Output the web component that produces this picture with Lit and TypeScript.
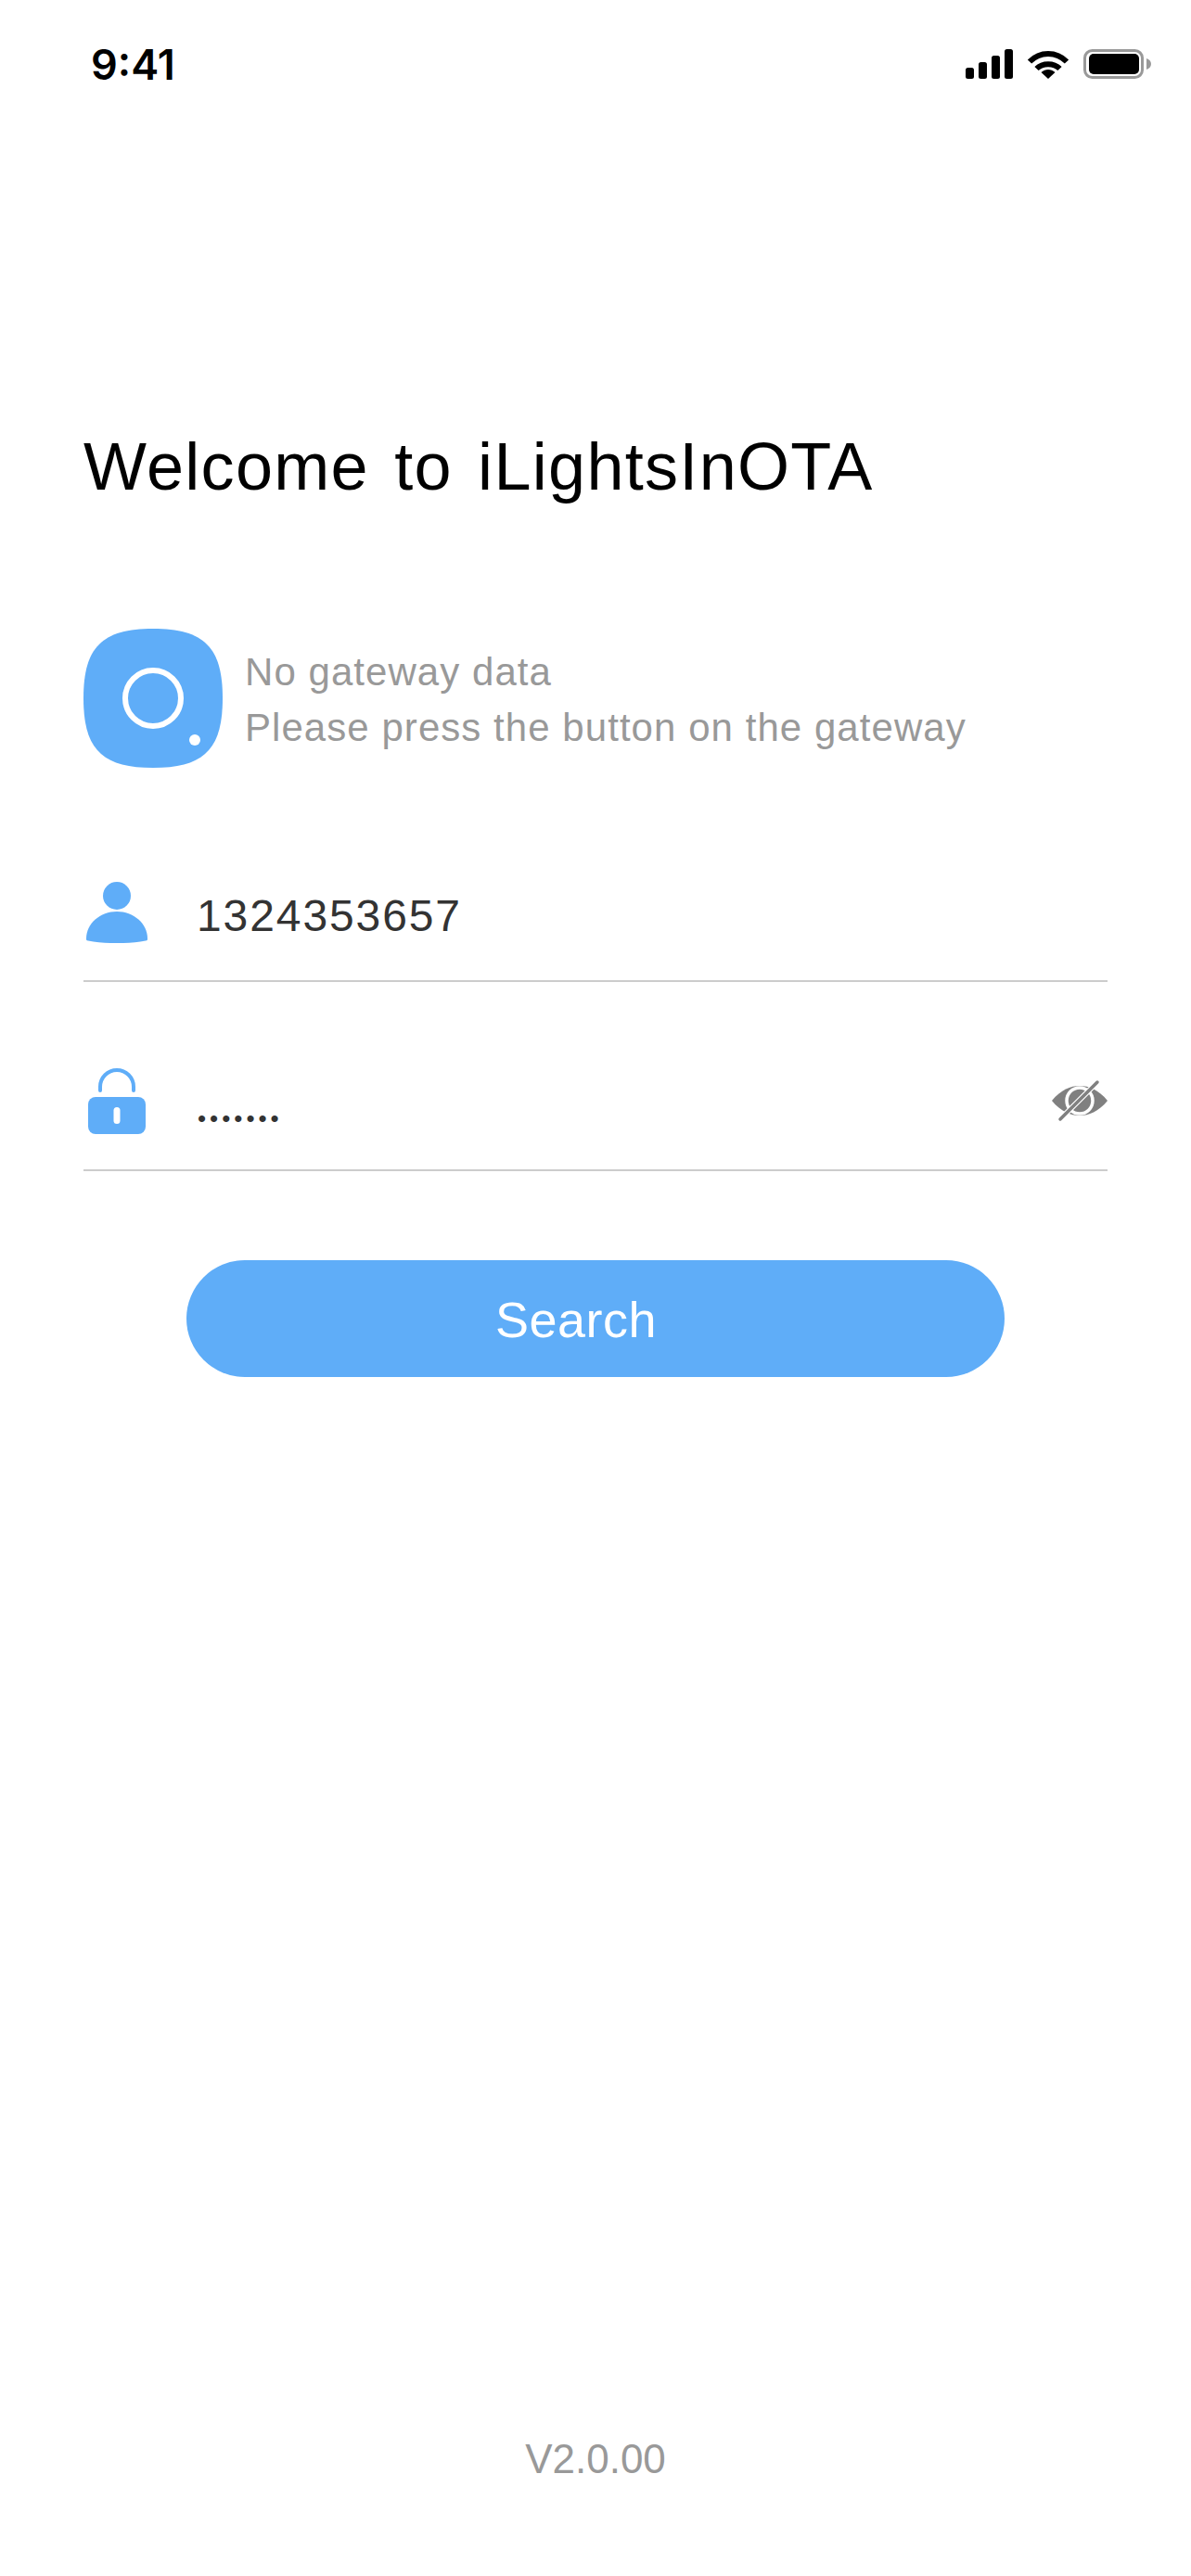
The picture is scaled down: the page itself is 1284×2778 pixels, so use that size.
import { LitElement, css, html } from 'lit';
import { customElement } from 'lit/decorators.js';

@customElement('app-root')
export class AppRoot extends LitElement {
  static styles = css`
    :host {
      display: block;
      font-family: 'Liberation Sans', Arial, sans-serif;
      background: #fff;
    }
    svg {
      display: block;
      flex: none;
    }
    .page {
      height: 2778px;
      display: flex;
      flex-direction: column;
    }
    .status {
      height: 138px;
      display: flex;
      align-items: flex-start;
      justify-content: space-between;
      padding: 53px 43px 0 98px;
      box-sizing: border-box;
    }
    .time {
      font-family: Inter, sans-serif;
      font-weight: 600;
      font-size: 45px;
      line-height: 33px;
      color: #000;
    }
    .status-icons {
      display: flex;
      align-items: flex-start;
      gap: 15px;
    }
    .content {
      flex: 1;
      display: flex;
      flex-direction: column;
      padding: 0 90px;
    }
    h1 {
      margin: 321px 0 0;
      font-size: 72px;
      line-height: 88px;
      font-weight: 400;
      color: #000;
      letter-spacing: 1.3px;
      word-spacing: 6px;
    }
    .gateway {
      margin-top: 131px;
      display: flex;
      align-items: center;
      gap: 24px;
    }
    .gateway-text {
      font-size: 42px;
      line-height: 60px;
      color: #999;
      letter-spacing: 1.05px;
      padding-top: 3px;
    }
    .field {
      display: flex;
      align-items: center;
      border-bottom: 2px solid #ccc;
    }
    .field.user {
      margin-top: 115px;
      padding: 0 0 32px 3px;
      height: 82px;
    }
    .field.pass {
      margin-top: 88px;
      padding: 0 0 33px 5px;
      height: 81px;
    }
    .value {
      margin-left: 53px;
      font-size: 48px;
      letter-spacing: 1.9px;
      color: #333;
      padding-top: 6px;
    }
    .dots {
      margin-left: 56px;
      flex: 1;
      font-size: 26px;
      letter-spacing: 4px;
      color: #333;
      padding-top: 38px;
    }
    .login {
      margin: 96px auto 0;
      width: 882px;
      height: 126px;
      border: none;
      border-radius: 63px;
      background: #5fadf8;
      color: #fff;
      font-family: inherit;
      font-size: 54px;
      letter-spacing: 0.5px;
      padding: 2px 42px 0 0;
    }
    .version {
      margin-top: auto;
      padding-bottom: 101px;
      text-align: center;
      font-size: 44px;
      color: #999;
    }
  `;

  render() {
    return html`
      <div class="page">
        <div class="status">
          <div class="time">9:41</div>
          <div class="status-icons">
            <svg width="51" height="32" viewBox="0 0 51 32">
              <rect x="0" y="20" width="9" height="12" rx="2.5" />
              <rect x="14" y="14" width="9" height="18" rx="2.5" />
              <rect x="28" y="7" width="9" height="25" rx="2.5" />
              <rect x="42" y="0" width="9" height="32" rx="2.5" />
            </svg>
            <svg width="46" height="32" viewBox="0 0 46 32">
              <path d="M3 13.5C14 2 32 2 43 13.5" fill="none" stroke="#000" stroke-width="6" />
              <path d="M10.5 21C17 14.5 29 14.5 35.5 21" fill="none" stroke="#000" stroke-width="6" />
              <path d="M15.5 25C20 21 26 21 30.5 25L23 32Z" />
            </svg>
            <svg width="73" height="32" viewBox="0 0 73 32">
              <rect x="1.5" y="1.5" width="62" height="29" rx="8" fill="none" stroke="#999" stroke-width="3" />
              <rect x="6" y="5" width="54" height="22" rx="5" />
              <path d="M68 10C71 11 73 13 73 16C73 19 71 21 68 22Z" fill="#999" />
            </svg>
          </div>
        </div>
        <div class="content">
          <h1>Welcome to iLightsInOTA</h1>
          <div class="gateway">
            <svg width="150" height="150" viewBox="0 0 150 150">
              <path d="M75 0C130 0 150 20 150 75C150 130 130 150 75 150C20 150 0 130 0 75C0 20 20 0 75 0Z" fill="#5fadf8" />
              <circle cx="75" cy="75" r="30" fill="none" stroke="#fff" stroke-width="6" />
              <circle cx="120" cy="120" r="6" fill="#fff" />
            </svg>
            <div class="gateway-text">
              <div>No gateway data</div>
              <div>Please press the button on the gateway</div>
            </div>
          </div>
          <div class="field user">
            <svg width="66" height="66" viewBox="0 0 66 66" fill="#5fadf8">
              <circle cx="33" cy="15" r="15" />
              <path d="M0 61C0 45 15 32 33 32C51 32 66 45 66 61C66 63 66 63 64 63.5C45 67 21 67 2 63.5C0 63 0 63 0 61Z" />
            </svg>
            <span class="value">1324353657</span>
          </div>
          <div class="field pass">
            <svg width="62" height="71" viewBox="0 0 62 71">
              <rect x="0" y="31" width="62" height="40" rx="8" fill="#5fadf8" />
              <path d="M13 24V20A18 18 0 0 1 49 20V24" fill="none" stroke="#5fadf8" stroke-width="4" stroke-linecap="round" />
              <rect x="27.5" y="42" width="7" height="18" rx="3.5" fill="#fff" />
            </svg>
            <span class="dots">•••••••</span>
            <svg width="60" height="50" viewBox="0 0 60 50">
              <path d="M0 24C10 12 20 8 30 8C40 8 50 12 60 24C50 36 40 40 30 40C20 40 10 36 0 24Z" fill="#808080" />
              <circle cx="30" cy="24" r="14" fill="#808080" stroke="#fff" stroke-width="3.5" />
              <path d="M9 44L49 4" stroke="#fff" stroke-width="6" />
              <path d="M9 44L49 4" stroke="#808080" stroke-width="3.5" stroke-linecap="round" />
            </svg>
          </div>
          <button class="login">Search</button>
          <div class="version">V2.0.00</div>
        </div>
      </div>
    `;
  }
}
